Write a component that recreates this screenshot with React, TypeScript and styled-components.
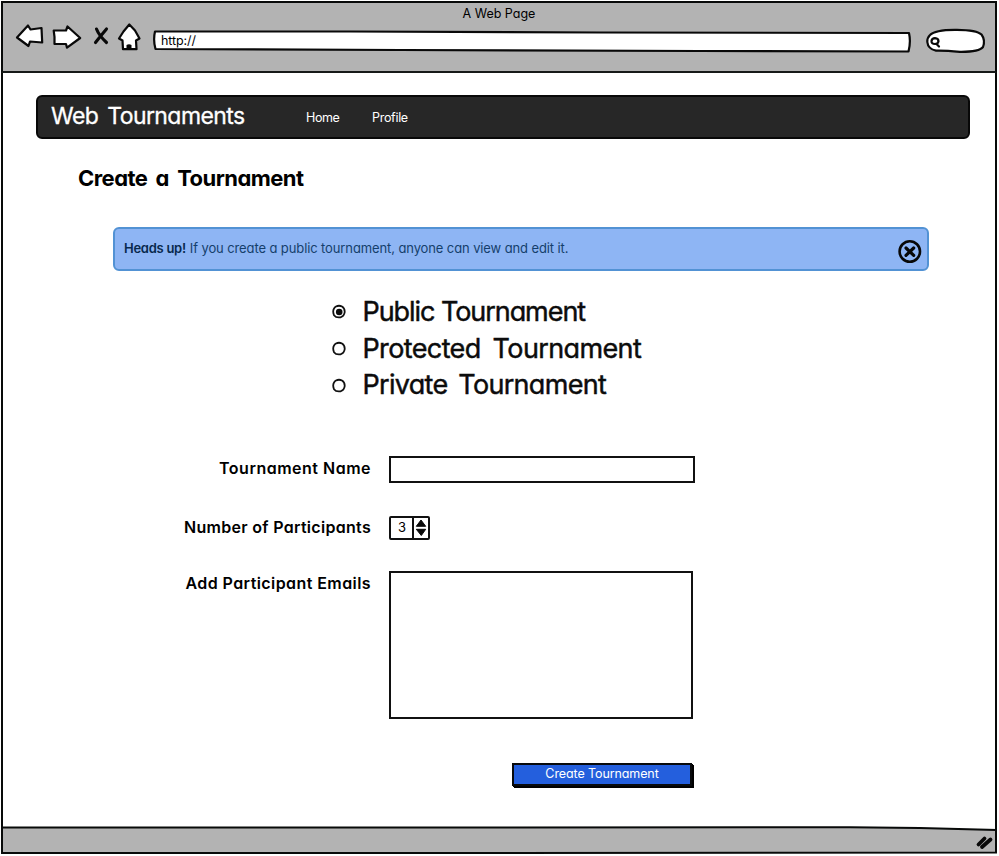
import React, { useState } from "react";
import styled, { createGlobalStyle } from "styled-components";

const Global = createGlobalStyle`
  * { box-sizing: border-box; }
  body { margin: 0; background: #fff; color: #000; overflow: hidden;
    font-family: Inter, "Liberation Sans", sans-serif; font-feature-settings: "cv11"; }
  button, input, textarea { font: inherit; font-feature-settings: inherit; border-radius: 0; }
`;

const Label = styled.span<{ $size: number; $track?: number; $gap?: number; $weight?: number; $stroke?: number }>`
  display: block;
  white-space: pre;
  font-size: ${p => p.$size}px;
  line-height: ${p => p.$size + 4}px;
  letter-spacing: ${p => p.$track ?? 0}px;
  word-spacing: ${p => p.$gap ?? 0}px;
  font-weight: ${p => p.$weight ?? 400};
  -webkit-text-stroke: ${p => p.$stroke ?? 0}px currentColor;
`;

const Browser = styled.div`
  width: 999px;
  height: 856px;
  display: grid;
  grid-template-rows: 73px 753px 30px;
`;
const Chrome = styled.header`
  margin: 1px 2px 0 1px;
  background: #b3b3b3;
  border: 2px solid #080a09;
  border-bottom-color: #161918;
`;
const PageTitle = styled.div`
  display: flex;
  justify-content: center;
  height: 20px;
  padding-top: 3px;
`;
const Controls = styled.div`
  display: flex;
  align-items: flex-start;
  padding-left: 12px;
  height: 36px;
`;
const IconButton = styled.button<{ $w: number }>`
  width: ${p => p.$w}px;
  height: 30px;
  padding: 0;
  border: 0;
  background: none;
  svg { display: block; overflow: visible; }
`;
const Field = styled.div<{ $w: number }>`
  display: grid;
  width: ${p => p.$w}px;
  height: 32px;
  > * { grid-area: 1 / 1; }
  svg { overflow: visible; }
`;
const Address = styled.div`
  padding: 10px 0 0 10px;
`;

const Page = styled.main`
  margin: 0 2px 0 1px;
  border: solid #080a09;
  border-width: 0 2px;
  padding-left: 1px;
`;
const Nav = styled.nav`
  display: flex;
  margin: 22px 0 0 32px;
  width: 934px;
  height: 44px;
  background: #272727;
  border: 2px solid #080808;
  border-radius: 6px;
  color: #fff;
  padding-left: 13px;
`;
const Brand = styled.div`
  width: 255px;
  padding-top: 6px;
`;
const NavLink = styled.a<{ $w: number }>`
  width: ${p => p.$w}px;
  padding-top: 13px;
`;
const Heading = styled.h1`
  margin: 26px 0 0 74px;
  height: 62px;
`;
const Alert = styled.section`
  display: flex;
  justify-content: space-between;
  margin-left: 109px;
  width: 816px;
  height: 44px;
  background: #8eb5f4;
  border: 2px solid #5292d4;
  border-radius: 6px;
  padding: 0 5px 0 9px;
  color: #153f6c;
`;
const Message = styled.div`
  display: flex;
  gap: 4px;
  padding-top: 11px;
  > :first-child { color: #08294d; }
`;
const Close = styled.button`
  padding: 0;
  margin-top: 11px;
  width: 25px;
  height: 25px;
  border: 0;
  background: none;
`;
const Choices = styled.div`
  margin: 23px 0 0 327px;
  height: 110px;
`;
const Choice = styled.button`
  display: flex;
  align-items: center;
  gap: 16px;
  height: 36.7px;
  padding: 0;
  border: 0;
  background: none;
  color: #0c0c0c;
  > span { margin: -2px 0 0 -0.5px; }
`;
const Form = styled.form`
  display: grid;
  grid-template-columns: 367px 306px;
  grid-template-rows: 60px 54.5px 192.5px 25px;
  column-gap: 17px;
  margin: 52px 0 0 1px;
`;
const FieldLabel = styled.label<{ $top: number }>`
  justify-self: end;
  padding-top: ${p => p.$top}px;
  padding-right: 1px;
`;
const TextField = styled.input`
  width: 306px;
  height: 27px;
  border: 2px solid #111;
  outline: 0;
  padding: 0 6px;
`;
const Emails = styled.textarea`
  width: 304px;
  height: 148px;
  margin: 0;
  border: 2px solid #111;
  outline: 0;
  resize: none;
  padding: 6px;
`;
const Stepper = styled.div`
  display: flex;
  width: 41px;
  height: 24px;
  border: 2px solid #111;
  border-radius: 2px;
`;
const Count = styled.div`
  width: 23px;
  border-right: 2px solid #111;
  padding: 1px 0 0 7px;
`;
const Arrows = styled.svg`
  width: 14px;
  height: 20px;
`;
const Submit = styled.button`
  justify-self: end;
  display: flex;
  justify-content: center;
  align-items: center;
  width: 180px;
  height: 23px;
  margin-right: 3px;
  padding: 0;
  background: #245fdd;
  border: 2px solid #080a0c;
  box-shadow: 1px 1px #000, 2px 2px #000;
  color: #fff;
`;
const StatusBar = styled.footer`
  margin: 0 2px 1px 1px;
  svg { display: block; overflow: visible; }
`;

const ink = { stroke: "#090909", strokeWidth: 2.2, strokeLinejoin: "round" as const, strokeLinecap: "round" as const };

function Radio({ on }: { on: boolean }) {
  return (
    <svg width="16" height="16" viewBox="0 0 16 16">
      <path d="M5 2.5 Q8 1 11 2.5 Q13.9 4.2 13.7 8.2 Q13 12.5 9.5 13.3 Q5 14 3 11.2 Q1.3 7 3.2 4.2 Q4 3 5 2.5Z" fill="#fff" stroke="#111" strokeWidth="1.8" />
      {on && <ellipse cx="8.2" cy="8" rx="3.3" ry="3.3" fill="#0a0a0a" />}
    </svg>
  );
}

const kinds = [
  { name: "Public Tournament", track: -1.06, gap: 0 },
  { name: "Protected Tournament", track: -0.62, gap: 5 },
  { name: "Private Tournament", track: -0.7, gap: 4 },
];

export default function App() {
  const [kind, setKind] = useState(0);
  const [notice, setNotice] = useState(true);
  return (
    <Browser>
      <Global />
      <Chrome>
        <PageTitle><Label $size={12.5}>A Web Page</Label></PageTitle>
        <Controls>
          <IconButton $w={36} aria-label="Back">
            <svg width="30" height="30" viewBox="15 22.5 30 30"><path d="M17 37 L28 25 L30.5 29 L41.5 27.5 L42.2 42 L30 41 L28.5 45.5 Z" fill="#fff" {...ink} /></svg>
          </IconButton>
          <IconButton $w={41} aria-label="Forward">
            <svg width="30" height="30" viewBox="51 22.5 30 30"><path d="M53.7 30 L66 30 L67.5 26 L80.2 37.5 L67 47.2 L66 43.5 L54.5 43.5 Q55 37 53.7 30Z" fill="#fff" {...ink} /></svg>
          </IconButton>
          <IconButton $w={25} aria-label="Stop">
            <svg width="18" height="30" viewBox="92 22.5 18 30"><path d="M96.5 28.5 Q99 35 106.5 42 M106.5 28.5 Q101 35 95.5 42" fill="none" {...ink} strokeWidth="3.1" /></svg>
          </IconButton>
          <IconButton $w={34} aria-label="Home page">
            <svg width="26" height="30" viewBox="117 22.5 26 30"><path d="M129.3 24 L135 30 L139.5 38 L136 40 L136.5 48.7 L123 48.7 L122.5 40 L119 38 L123.5 31 Z" fill="#fff" {...ink} /><path d="M126.5 49 V44.5 Q129 43 131.5 44.5 V49Z" fill="#080808" /></svg>
          </IconButton>
          <Field $w={773}>
            <svg width="762" height="30" viewBox="151 23 762 30"><path d="M155 31.5 L350 31.5 L600 32.5 L909 33 Q911 42 908.5 51.5 L700 51 L400 50 L155.5 49 Q153 40 155 31.5Z" fill="#fff" {...ink} /></svg>
            <Address><Label $size={12.5} $track={-0.1}>http://</Label></Address>
          </Field>
          <IconButton $w={64} aria-label="Search">
            <svg width="62" height="30" viewBox="924 23 62 30"><path d="M930 35 Q935 29.5 957 29.8 Q977 30 981.5 34.5 Q985.5 40 983 47 Q979 52 960 51.8 Q945 50.5 936 50.7 Q928 49 927.3 42 Q927 38 930 35Z" fill="#fff" {...ink} /><path d="M931.5 41 Q932 38.2 935 38.2 Q938.5 38.5 938.5 41.2 Q938 44 935 44 Q931.3 44 931.5 41Z M936.5 44 L939 46.5" fill="none" {...ink} /></svg>
          </IconButton>
        </Controls>
      </Chrome>

      <Page>
        <Nav>
          <Brand><Label $size={23} $track={-0.57} $gap={3} $stroke={0.3}>Web Tournaments</Label></Brand>
          <NavLink $w={66}><Label $size={12.5} $track={-0.4}>Home</Label></NavLink>
          <NavLink $w={66}><Label $size={12.5} $track={-0.3}>Profile</Label></NavLink>
        </Nav>
        <Heading><Label $size={22} $track={-0.55} $gap={3.6} $weight={680}>Create a Tournament</Label></Heading>
        {notice && (
          <Alert>
            <Message>
              <Label $size={13} $weight={600} $track={-0.27}>Heads up!</Label>
              <Label $size={13} $track={-0.11}>If you create a public tournament, anyone can view and edit it.</Label>
            </Message>
            <Close aria-label="Dismiss" onClick={() => setNotice(false)}>
              <svg width="25" height="25" viewBox="0 0 25 25"><circle cx="12.8" cy="11.5" r="10.2" fill="none" stroke="#080808" strokeWidth="2.6" /><path d="M9 8 L16.7 15.3 M16.7 8 L9 15.3" stroke="#080808" strokeWidth="3.2" strokeLinecap="round" /></svg>
            </Close>
          </Alert>
        )}
        <Choices role="radiogroup">
          {kinds.map((k, i) => (
            <Choice key={k.name} role="radio" aria-checked={kind === i} onClick={() => setKind(i)}>
              <Radio on={kind === i} />
              <Label $size={27} $track={k.track} $gap={k.gap} $stroke={0.45}>{k.name}</Label>
            </Choice>
          ))}
        </Choices>
        <Form onSubmit={e => e.preventDefault()}>
          <FieldLabel $top={2}><Label $size={16} $weight={640} $track={0.5}>Tournament Name</Label></FieldLabel>
          <TextField />
          <FieldLabel $top={1}><Label $size={16} $weight={640} $track={0.3}>Number of Participants</Label></FieldLabel>
          <Stepper>
            <Count><Label $size={13}>3</Label></Count>
            <Arrows viewBox="0 0 14 20"><path d="M7 2 L11.7 8.3 H2.3Z M2.3 11.3 H11.7 L7.3 17.5Z" fill="#080808" stroke="#080808" strokeLinejoin="round" /></Arrows>
          </Stepper>
          <FieldLabel $top={2}><Label $size={16} $weight={640} $track={0.42}>Add Participant Emails</Label></FieldLabel>
          <Emails />
          <span />
          <Submit><Label $size={12.5} $track={-0.1}>Create Tournament</Label></Submit>
        </Form>
      </Page>

      <StatusBar>
        <svg width="996" height="29" viewBox="1 826 996 29">
          <path d="M2 827.5 L500 827.5 L850 827.3 L920 828 L996 830 V852.5 Q700 853.5 400 853 L2 853Z" fill="#b3b3b3" stroke="#080a09" strokeWidth="2" />
          <path d="M2 826 V828 M996 826 V831" stroke="#080a09" strokeWidth="2" />
          <path d="M978.5 844.5 L984.5 838.5 M982 847 L990.5 839.5" {...ink} strokeWidth="3.8" />
        </svg>
      </StatusBar>
    </Browser>
  );
}
